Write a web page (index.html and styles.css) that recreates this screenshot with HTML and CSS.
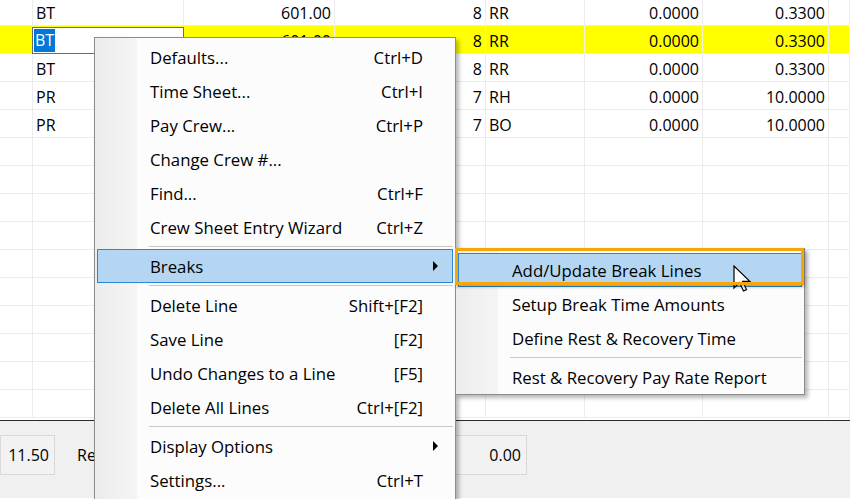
FILE: index.html
```html
<!DOCTYPE html>
<html lang="en">
<head>
    <meta charset="UTF-8">
    <title>Crew Sheet</title>
    <link rel="stylesheet" href="styles.css">
</head>
<body>
<div class="grid">
    <div class="row">
        <span></span><span>BT</span><span class="r">601.00</span><span class="r">8</span><span>RR</span><span class="r">0.0000</span><span class="r">0.3300</span><span></span>
    </div>
    <div class="row hl">
        <span></span><span class="edit"><em>BT</em></span><span class="r">601.00</span><span class="r">8</span><span>RR</span><span class="r">0.0000</span><span class="r">0.3300</span><span></span>
    </div>
    <div class="row">
        <span></span><span>BT</span><span class="r">601.00</span><span class="r">8</span><span>RR</span><span class="r">0.0000</span><span class="r">0.3300</span><span></span>
    </div>
    <div class="row">
        <span></span><span>PR</span><span class="r">11.50</span><span class="r">7</span><span>RH</span><span class="r">0.0000</span><span class="r">10.0000</span><span></span>
    </div>
    <div class="row">
        <span></span><span>PR</span><span class="r">11.50</span><span class="r">7</span><span>BO</span><span class="r">0.0000</span><span class="r">10.0000</span><span></span>
    </div>
    <div class="row"><span></span><span></span><span></span><span></span><span></span><span></span><span></span><span></span></div>
    <div class="row"><span></span><span></span><span></span><span></span><span></span><span></span><span></span><span></span></div>
    <div class="row"><span></span><span></span><span></span><span></span><span></span><span></span><span></span><span></span></div>
    <div class="row"><span></span><span></span><span></span><span></span><span></span><span></span><span></span><span></span></div>
    <div class="row"><span></span><span></span><span></span><span></span><span></span><span></span><span></span><span></span></div>
    <div class="row"><span></span><span></span><span></span><span></span><span></span><span></span><span></span><span></span></div>
    <div class="row"><span></span><span></span><span></span><span></span><span></span><span></span><span></span><span></span></div>
    <div class="row"><span></span><span></span><span></span><span></span><span></span><span></span><span></span><span></span></div>
    <div class="row"><span></span><span></span><span></span><span></span><span></span><span></span><span></span><span></span></div>
    <div class="row"><span></span><span></span><span></span><span></span><span></span><span></span><span></span><span></span></div>
</div>
<div class="totals">
    <div class="box">11.50</div>
    <div class="label"><span>Regular Hrs</span></div>
    <div class="box">0.00</div>
</div>

<ul class="menu">
    <li><b>Defaults...</b><i>Ctrl+D</i></li>
    <li><b>Time Sheet...</b><i>Ctrl+I</i></li>
    <li><b>Pay Crew...</b><i>Ctrl+P</i></li>
    <li><b>Change Crew #...</b></li>
    <li><b>Find...</b><i>Ctrl+F</i></li>
    <li><b>Crew Sheet Entry Wizard</b><i>Ctrl+Z</i></li>
    <li class="sep"></li>
    <li class="on sub"><b>Breaks</b></li>
    <li class="sep"></li>
    <li><b>Delete Line</b><i>Shift+[F2]</i></li>
    <li><b>Save Line</b><i>[F2]</i></li>
    <li><b>Undo Changes to a Line</b><i>[F5]</i></li>
    <li><b>Delete All Lines</b><i>Ctrl+[F2]</i></li>
    <li class="sep"></li>
    <li class="sub"><b>Display Options</b></li>
    <li><b>Settings...</b><i>Ctrl+T</i></li>
</ul>

<ul class="menu submenu">
    <li class="on"><b>Add/Update Break Lines</b></li>
    <li><b>Setup Break Time Amounts</b></li>
    <li><b>Define Rest &amp; Recovery Time</b></li>
    <li class="sep"></li>
    <li><b>Rest &amp; Recovery Pay Rate Report</b></li>
</ul>

<svg class="cursor" width="19" height="28" viewBox="0 0 19 28">
    <path d="M1 1 L1 23 L6.5 17.5 L10.5 26 L13.5 24.6 L9.6 16.3 L16.8 16.3 Z" fill="#fff" stroke="#000" stroke-width="1.2" stroke-linejoin="miter"/>
</svg>
<div class="mark"></div>
</body>
</html>
```

FILE: styles.css
```css
* {margin:0; padding:0; list-style:none; box-sizing:border-box;}
body {font-family:"Open Sans", "Noto Sans", sans-serif; font-size:16px; color:#000; background:#fff; overflow:hidden; width:850px; height:499px; position:relative;}

/* data grid */
.grid {height:421px; overflow:hidden; border-bottom:1px solid #2b2b2b;}
.grid .row {display:grid; grid-template-columns:33px 151px 151px 151px 99px 118px 126px 1fr; height:28px; border-bottom:1px solid #ececec;}
.grid .row:first-child {margin-top:-2px;}
.grid .row span {border-right:1px solid #ececec; padding:2px 3px 0; line-height:27px; white-space:nowrap; overflow:hidden;}
.grid .row span.r {text-align:right;}
.grid .row.hl {background:#ffff00;}
.grid .row.hl span {border-right-color:#f4f4d0;}
.grid .row span.edit {background:#fff; border:1px solid #6a6a6a; margin:1px 0 -1px -1px; padding:1px 0 0 1px; line-height:23px;}
.grid .row span.edit em {font-style:normal; background:#0078d7; color:#fff; padding:0 1px; display:inline-block; line-height:23px;}

/* totals strip */
.totals {height:77px; background:#f0f0f0; display:grid; grid-template-columns:55px 352px 120px; align-items:start; padding-top:14px;}
.totals .box {height:40px; border:1px solid #d9d9d9; background:#f2f2f2; text-align:right; padding-right:5px; line-height:38px;}
.totals .label {padding-left:22px; line-height:40px;}
.totals .label span {display:block; width:17px; overflow:hidden; white-space:nowrap;}

/* context menu */
.menu {position:absolute; left:94px; top:37px; width:362px; height:470px; border:1px solid #8c8c8c; padding:2px 2px; box-shadow:3px 3px 4px rgba(0,0,0,.28); font-size:16.8px;
    background:linear-gradient(to right, #ececec 0, #f5f5f5 42px, #fcfcfc 42px, #fcfcfc 100%);}
.menu li {display:flex; justify-content:space-between; align-items:center; height:34px; padding:0 29px 0 52px; border:1px solid transparent; position:relative; white-space:nowrap;}
.menu li b, .menu li i {font-weight:normal; font-style:normal;}
.menu li.on {background:#b5d6f2; border-color:#2b86d6;}
.menu li.sub:after {content:""; position:absolute; right:14px; top:11px; border-left:5px solid #000; border-top:5px solid transparent; border-bottom:5px solid transparent;}
.menu li.sep {height:1px; margin:2px 0 2px 52px; padding:0; border:0; background:#c8c8c8;}

.submenu {left:455px; top:248px; width:350px; height:147px; padding:4px 2px 2px;}
.submenu li {padding-left:53px;}

/* pointer and highlight frame */
.cursor {position:absolute; left:733px; top:265px;}
.mark {position:absolute; left:455px; top:248px; width:349px; height:37px; border:3px solid #f5a60a; box-shadow:1px 2px 3px rgba(0,0,0,.25);}
```
